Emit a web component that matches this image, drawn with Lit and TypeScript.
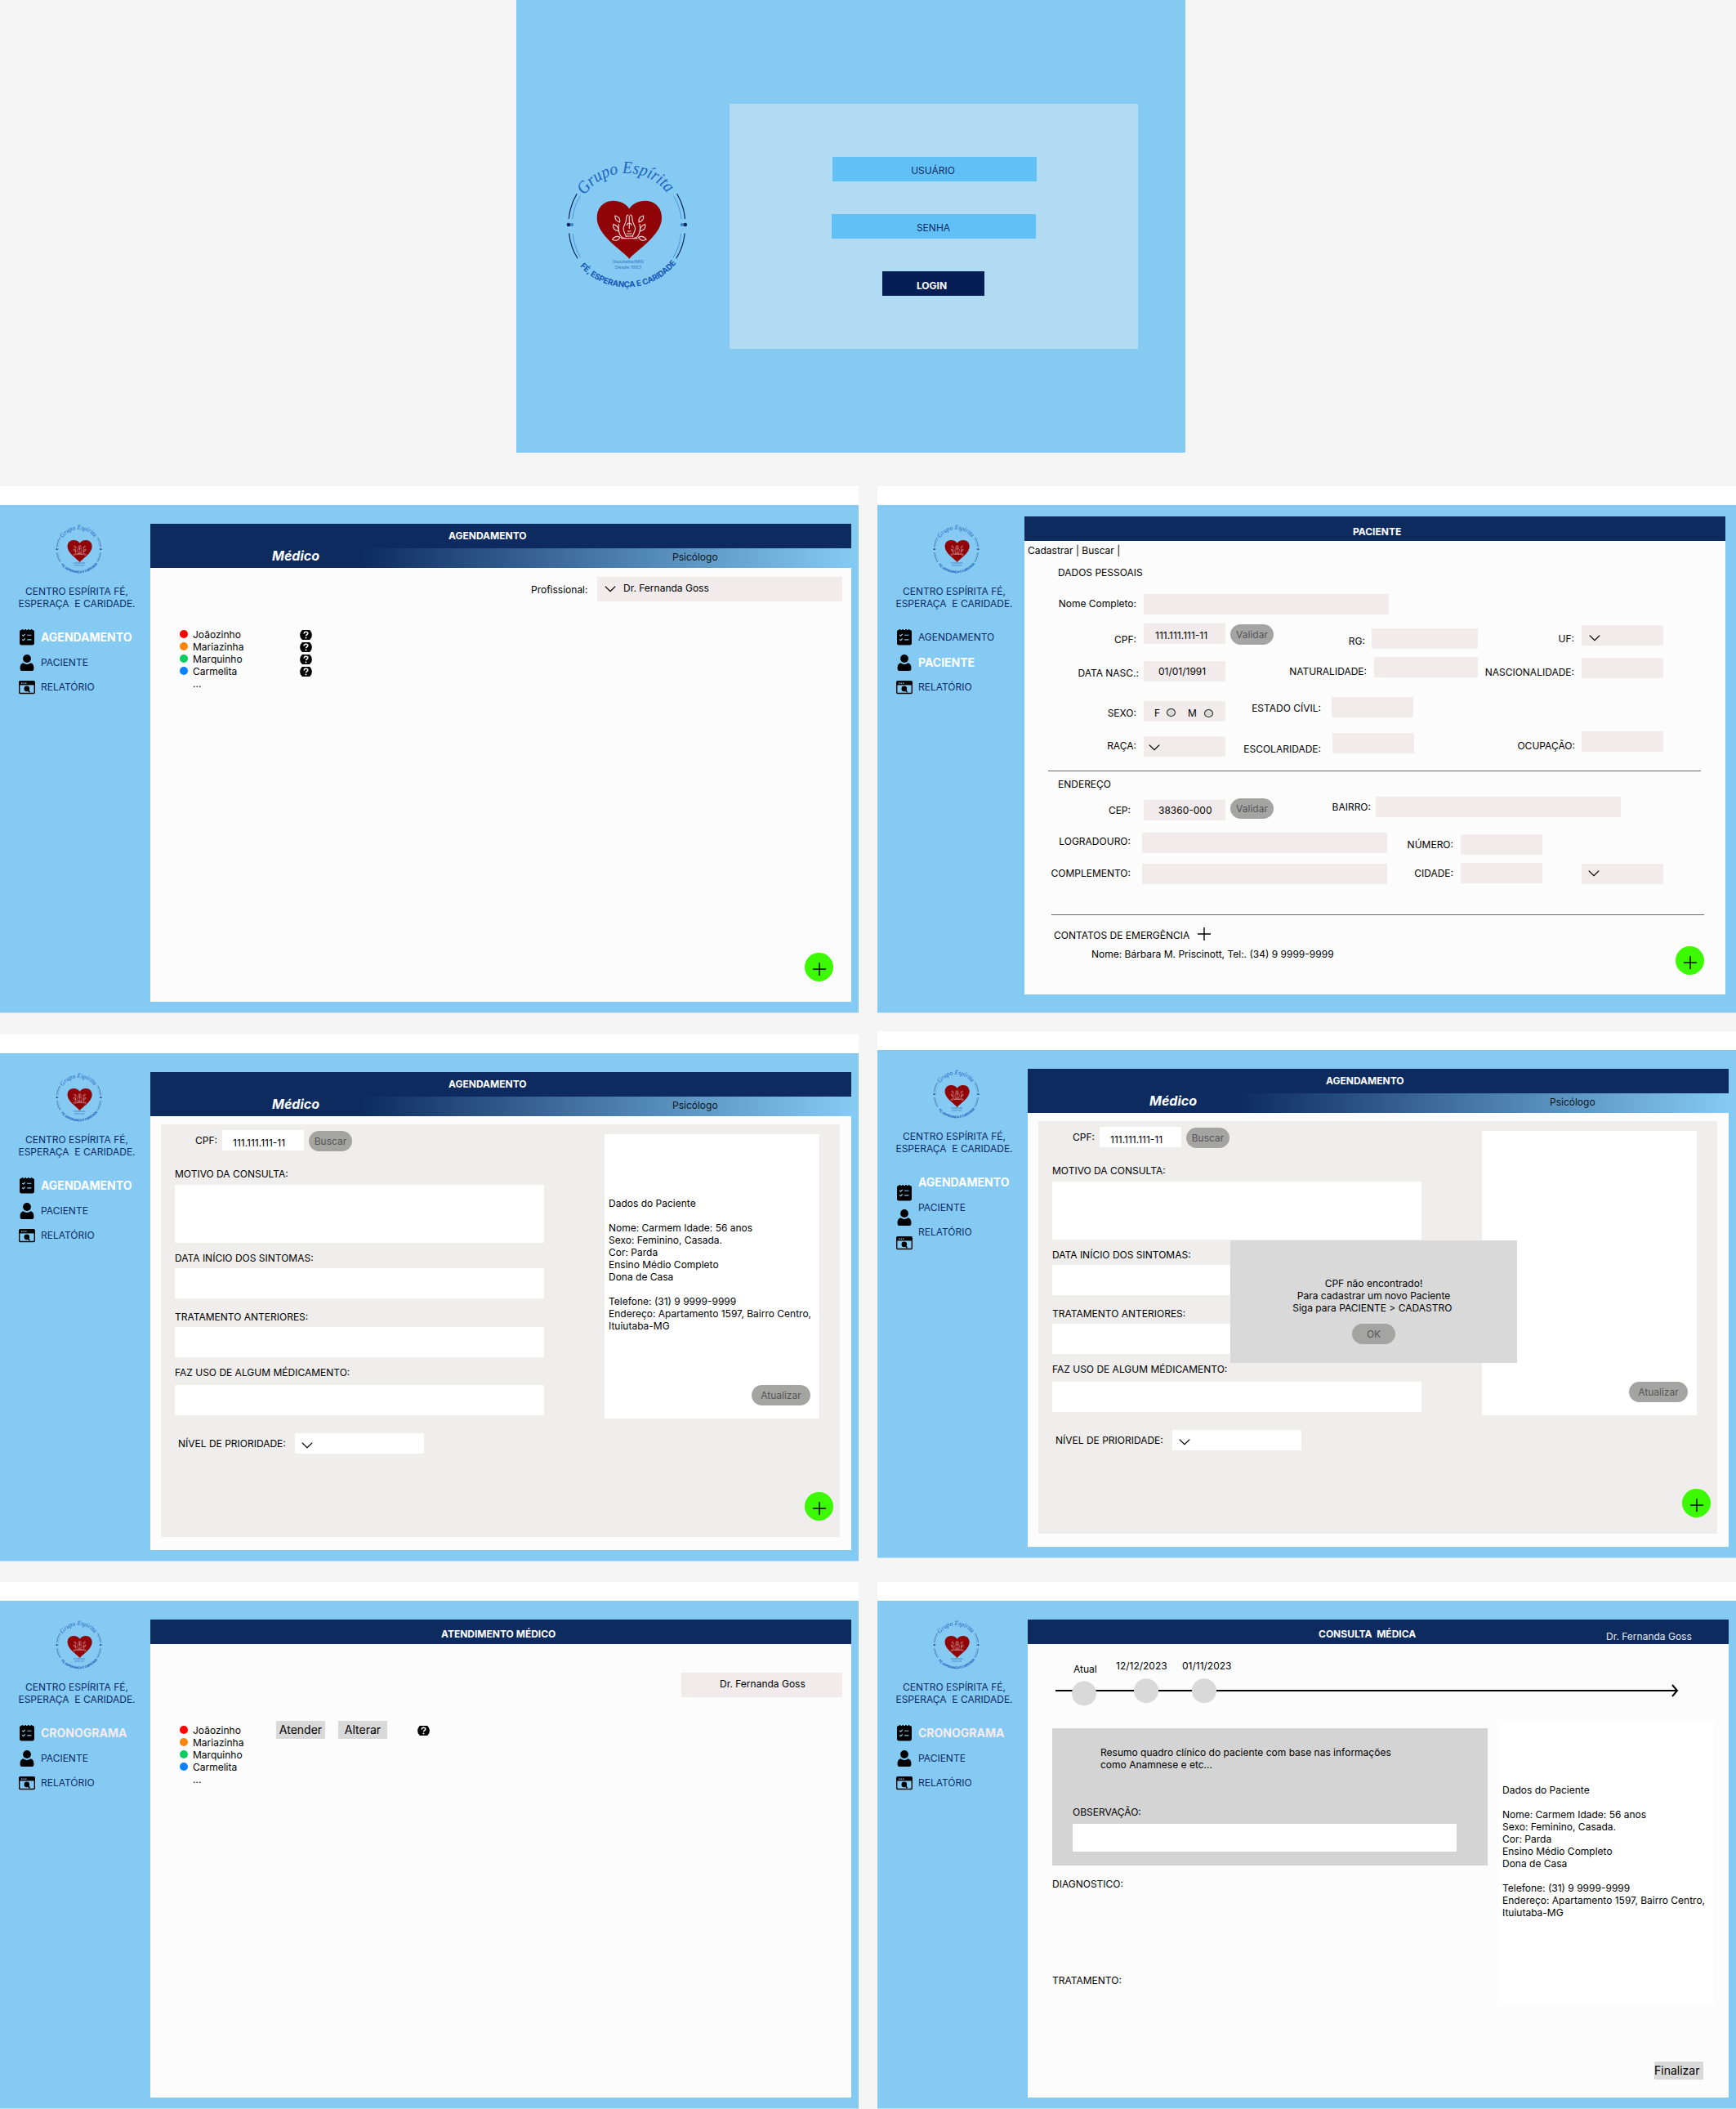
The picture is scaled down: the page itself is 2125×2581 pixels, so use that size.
import { LitElement, html, svg, css, unsafeCSS, nothing } from "lit";
import { customElement, property } from "lit/decorators.js";

/** Pixel scales for spacing and sizing helpers (ml-12, mt-4, w-100, h-25). */
const scale = (prefix: string, prop: string, max: number) =>
  Array.from({ length: max + 1 }, (_, i) => `.${prefix}-${i}{${prop}:${i}px}`).join("");

const spacing = unsafeCSS(
  scale("ml", "margin-left", 820) +
    scale("mt", "margin-top", 120) +
    scale("w", "width", 860) +
    scale("h", "height", 360),
);

const base = css`
  * {
    box-sizing: border-box;
  }
  :host {
    font-family: Inter, "Liberation Sans", sans-serif;
    font-size: 12px;
    line-height: 15px;
    color: #000;
  }
  svg {
    display: block;
    flex: none;
  }
`;

const calendarIcon = html`<svg width="20" height="20" viewBox="0 0 20 20">
  <rect x="1" y="1" width="18" height="18.200" rx="2" />
  <path d="M4.5 0v3M8.2 0v3M11.8 0v3M15.5 0v3" stroke="#000" stroke-width="1.6" />
  <path d="M2.5 19.4h15" stroke="#2a4658" stroke-width=".6" />
  <path d="M4.2 7l1.300 1.200 2.200-2.200M4.200 12.500l1.300 1.200 2.200-2.200M10.200 7.300h5.200M10.200 12.900h5.200" fill="none" stroke="#84caf3" stroke-width="1.1" />
</svg>`;

const userIcon = html`<svg width="20" height="20" viewBox="0 0 20 20">
  <circle cx="10" cy="5" r="4.9" />
  <path d="M5.500 10.200a6.800 6.800 0 0 0 9 0c2.500.6 3.900 2.900 3.900 5.600v1.400c0 1.900-1.200 3-3.100 3H4.700c-1.900 0-3.100-1.100-3.100-3v-1.400c0-2.700 1.400-5 3.900-5.600z" />
</svg>`;

const reportIcon = html`<svg width="20" height="20" viewBox="0 0 20 20">
  <rect x=".7" y="2.700" width="18.600" height="14.800" rx="1.200" fill="none" stroke="#000" stroke-width="1.400" />
  <path d="M1 3h18v4.400H1z" />
  <path d="M3 5.200h1.500M5.500 5.200h1.500M8 5.200h1.500" stroke="#84caf3" stroke-width="1.200" />
  <circle cx="9.800" cy="11.900" r="3.300" />
  <path d="M11.800 14l1.600 2.200" stroke="#000" stroke-width="1.600" />
</svg>`;

const helpIcon = html`<svg width="15" height="12" viewBox="0 0 15 12">
  <circle cx="7.500" cy="6" r="7.400" />
  <path d="M5.200 4.400c0-1.400 1-2.100 2.300-2.100s2.300.7 2.300 1.900c0 1.500-2.200 1.500-2.200 3.100" fill="none" stroke="#fff" stroke-width="1.600" />
  <circle cx="7.500" cy="9.400" r="1" fill="#fff" />
</svg>`;

const chevron = html`<svg class="chevron" width="14" height="8" viewBox="0 0 14 8">
  <path d="M.8.6L7 6.600 13.200.6" fill="none" stroke="#000" stroke-width="1.300" />
</svg>`;

const plus = html`<svg width="16" height="16" viewBox="0 0 16 16">
  <path d="M8 0v16M0 8h16" stroke="#000" stroke-width="1.400" />
</svg>`;

@customElement("brand-logo")
export class BrandLogo extends LitElement {
  static styles = css`
    :host {
      display: block;
    }
    svg {
      display: block;
      width: 100%;
      height: 100%;
      overflow: visible;
    }
    .script {
      font: italic 21px "Liberation Serif", serif;
      fill: #1c62bd;
    }
    .motto {
      font: 700 9.8px Inter, sans-serif;
      fill: #1457b4;
    }
    .place {
      font: 500 4.9px/1 Inter, sans-serif;
      fill: #3f80c6;
      text-anchor: middle;
    }
  `;

  render() {
    const side = svg`
      <g fill="none">
        <path d="M26.200 57A71.500 71.500 0 0 0 16.300 88M16.600 105.500A71.500 71.500 0 0 0 27 136.300" stroke="#0a2458" stroke-width="1.200"/>
        <path d="M30.400 59.500A67 67 0 0 0 20.800 88M21.200 106A67 67 0 0 0 30.600 135" stroke="#4f93da" stroke-width="1"/>
      </g>
      <circle cx="20" cy="95" r="2.100" fill="#3a7fd0"/>
      <circle cx="16" cy="95" r="2.300" fill="#0a2458"/>`;
    const leaves = svg`
      <path d="M86 111.500C79 112 76 104 77.500 94M78.500 92c-4.500-1.500-6-4.500-5.500-8 4.500 1 6.500 4 5.500 8zM77 103c-5-1-7.500-4.500-6-8.500 4.500 1.500 6.500 4.500 6 8.500zM79 110.500c-3.500-2-7-1-9.500 2.500 4 2.300 7.500 1.500 9.500-2.500z"/>
      <path d="M89.500 83c-2.500 0-2.800 2-2.800 4.500 0 6-3.200 7.500-3.700 12 0 4 2.500 6 3.500 10.500"/>`;
    return html`<svg viewBox="0 0 180 200">
      <path id="top" d="M35.500 59A62.500 62.500 0 0 1 142.500 65.500" fill="none" />
      <path id="bottom" d="M29.500 145A76.500 76.500 0 0 0 147 143" fill="none" />
      <text class="script"><textPath href="#top" textLength="118" lengthAdjust="spacingAndGlyphs">Grupo Espírita</textPath></text>
      ${side}
      <g transform="translate(174.800 0) scale(-1 1)">${side}</g>
      <path fill="#900408" d="M90.300 136.700C82 126.500 50.700 108.500 50.700 86.500 50.700 73.500 59.500 65.700 70.500 65.700c9 0 16.500 4 19.800 9.800 3.300-5.800 10.800-9.800 19.800-9.800 11 0 19.900 7.800 19.900 20.800 0 22-31.400 40-39.700 50.200z" />
      <g fill="none" stroke="#f2dedd" stroke-width="1.100">
        ${leaves}
        <g transform="translate(180.600 0) scale(-1 1)">${leaves}</g>
        <path d="M90.300 84v16M87.500 96c0-4 5.600-4 5.600 0M88 103h4.600M87 106h6.600M86 109h8.600M80 111.700h20.600" />
      </g>
      <text class="place" x="89" y="142.400" textLength="38" lengthAdjust="spacingAndGlyphs">Ituiutaba/MG</text>
      <text class="place" x="89" y="149" textLength="32" lengthAdjust="spacingAndGlyphs">Desde 1953</text>
      <text class="motto"><textPath href="#bottom" textLength="134" startOffset="1">FÉ, ESPERANÇA E CARIDADE</textPath></text>
    </svg>`;
  }
}

@customElement("app-shell")
export class AppShell extends LitElement {
  @property() first = "AGENDAMENTO";
  @property() active = "AGENDAMENTO";

  static styles = [
    base,
    css`
      :host {
        display: flex;
        width: 1051px;
        height: 645px;
        border-top: 23px solid #fff;
        border-bottom: 1px solid #c3e2f4;
        background: #84caf3;
      }
      .side {
        width: var(--side, 184px);
        flex: none;
        padding-top: 18px;
        color: #0d2b66;
      }
      brand-logo {
        width: 69px;
        height: 76px;
        margin-left: 63px;
      }
      .name {
        width: 188px;
        margin-top: 4px;
        text-align: center;
        white-space: pre;
      }
      .nav {
        display: flex;
        gap: 7px;
        margin: 24px 0 0 23px;
      }
      .icons,
      .labels {
        display: grid;
        grid-auto-rows: 20px;
        row-gap: 10.5px;
      }
      .icons {
        padding-top: var(--icon-drop, 0);
      }
      .labels {
        line-height: 20px;
        white-space: nowrap;
      }
      .on {
        font-size: 14px;
        font-weight: 700;
        color: var(--active, #fff);
      }
      .main {
        display: flex;
        flex-direction: column;
        position: relative;
        width: 858px;
        height: 585px;
        margin-top: var(--drop, 23px);
        background: #fcfcfc;
      }
    `,
  ];

  render() {
    const labels = [this.first, "PACIENTE", "RELATÓRIO"];
    return html`
      <div class="side">
        <brand-logo></brand-logo>
        <div class="name">CENTRO ESPÍRITA FÉ,
ESPERAÇA  E CARIDADE.</div>
        <div class="nav">
          <div class="icons">${calendarIcon}${userIcon}${reportIcon}</div>
          <div class="labels">
            ${labels.map((l) => html`<span class=${l === this.active ? "on" : ""}>${l}</span>`)}
          </div>
        </div>
      </div>
      <div class="main"><slot></slot></div>
    `;
  }
}

@customElement("app-root")
export class AppRoot extends LitElement {
  static styles = [
    base,
    spacing,
    css`
      :host {
        display: block;
        width: 2125px;
        height: 2581px;
        overflow: hidden;
        background: #f5f5f5;
      }
      .login {
        display: flex;
        align-items: flex-start;
        width: 819px;
        height: 554px;
        margin-left: 632px;
        background: #84caf3;
      }
      .login brand-logo {
        width: 180px;
        height: 200px;
        margin: 180px 0 0 48px;
      }
      .login-card {
        display: flex;
        flex-direction: column;
        width: 500px;
        height: 300px;
        margin: 127px 0 0 33px;
        padding-top: 65px;
        background: #b1daf3;
      }
      .login-card div {
        height: 30px;
        text-align: center;
        color: #0d2b66;
        background: #61c1f7;
      }
      .user {
        width: 250px;
        margin-left: 126px;
        padding: 9px 4px 0 0;
      }
      .pass {
        width: 250px;
        margin: 40px 0 0 125px;
        padding: 9px 1px 0 0;
      }
      .login-card .enter {
        width: 125px;
        margin: 40px 0 0 187px;
        padding: 10px 4px 0 0;
        font-weight: 700;
        color: #fff;
        background: #051f56;
      }
      .board {
        display: flex;
        gap: 23px;
        padding-top: 41px;
      }
      .col {
        display: flex;
        flex-direction: column;
      }
      .paciente {
        --side: 180px;
        --drop: 14px;
      }
      .missing {
        --icon-drop: 12.500px;
      }
      .crono {
        --active: #f6ecee;
      }
      .bar {
        display: flex;
        flex: none;
        height: 30px;
        font-weight: 700;
        color: #fff;
        background: #0d2b5f;
        white-space: pre;
      }
      .bar .who {
        font-weight: 400;
        color: #e4e8f0;
      }
      .tabs {
        display: flex;
        flex: none;
        height: 24px;
        white-space: nowrap;
        background: linear-gradient(90deg, #0d2b5f 30%, #84caf3 100%);
      }
      .tabs .sel {
        font-size: 16px;
        line-height: 19px;
        font-weight: 700;
        font-style: italic;
        color: #fff;
      }
      .psi {
        color: #0b131c;
      }
      .row {
        display: flex;
        align-items: flex-start;
        flex: none;
        white-space: nowrap;
      }
      .lbl {
        flex: none;
        white-space: pre;
      }
      .r {
        text-align: right;
      }
      .field {
        display: flex;
        align-items: flex-start;
        flex: none;
        background: #f1ebeb;
      }
      .white {
        background: #fff;
      }
      .pill {
        flex: none;
        height: 25px;
        border-radius: 13px;
        line-height: 26px;
        text-align: center;
        color: #555;
        background: #a4a4a3;
      }
      .rule {
        flex: none;
        width: 799px;
        height: 1px;
        background: #6e6668;
      }
      .radio {
        width: 11px;
        height: 10px;
        border: 1px solid #222;
        border-radius: 50%;
        background: #d9d9d9;
      }
      .fab {
        display: grid;
        place-items: center;
        flex: none;
        width: 35px;
        height: 35px;
        padding-top: 5px;
        border-radius: 50%;
        background: #3cfa00;
      }
      .bottom {
        margin-top: auto;
        margin-bottom: 25px;
      }
      .dots,
      .helps {
        display: grid;
      }
      .dots {
        gap: 5px;
      }
      .helps {
        gap: 3px;
      }
      .dot {
        width: 10px;
        height: 10px;
        border-radius: 50%;
      }
      .red {
        background: #f00;
      }
      .orange {
        background: #fb840c;
      }
      .green {
        background: #0ecc5f;
      }
      .blue {
        background: #0a82ff;
      }
      .box {
        display: flex;
        flex-direction: column;
        width: 831px;
        height: 505px;
        margin: 10px 0 0 13px;
        background: #efeeec;
      }
      .card {
        flex: none;
        width: 263px;
        height: 348px;
        background: #fff;
        white-space: pre;
      }
      .modal {
        position: absolute;
        left: 248px;
        top: 210px;
        width: 351px;
        height: 150px;
        padding-top: 45px;
        text-align: center;
        white-space: pre;
        background: #d9d9d9;
      }
      .modal .pill {
        width: 53px;
        margin: 12px auto 0;
      }
      .btn {
        flex: none;
        width: 60px;
        height: 22px;
        font-size: 14px;
        line-height: 22px;
        text-align: center;
        background: #d9d9d9;
      }
      .finish {
        text-align: left;
      }
      .summary {
        width: 533px;
        height: 168px;
        padding-top: 22px;
        background: #d4d4d4;
      }
    `,
  ];

  private label(text: string, cls: string) {
    return html`<span class="lbl ${cls}">${text}</span>`;
  }

  private field(cls: string, content: unknown = nothing) {
    return html`<div class="field h-25 ${cls}">${content}</div>`;
  }

  private tabs() {
    return html`
      <div class="bar"><span class="ml-365 mt-7">AGENDAMENTO</span></div>
      <div class="tabs">
        <span class="sel ml-149 w-490">Médico</span>
        <span class="psi mt-3">Psicólogo</span>
      </div>
    `;
  }

  private queue(cls: string, actions: unknown, helps: number) {
    return html`<div class="row ${cls}">
      <div class="dots ml-36 mt-6">
        ${["red", "orange", "green", "blue"].map((c) => html`<i class="dot ${c}"></i>`)}
      </div>
      <div class="lbl ml-6 mt-4 w-101">Joãozinho
Mariazinha
Marquinho
Carmelita
...</div>
      ${actions}
      <div class="helps mt-6">${Array.from({ length: helps }, () => helpIcon)}</div>
    </div>`;
  }

  private patientInfo() {
    return `Dados do Paciente

Nome: Carmem Idade: 56 anos
Sexo: Feminino, Casada.
Cor: Parda
Ensino Médio Completo
Dona de Casa

Telefone: (31) 9 9999-9999
Endereço: Apartamento 1597, Bairro Centro,
Ituiutaba-MG`;
  }

  private booking(info: string) {
    const question = (text: string, labelCls: string, fieldCls: string) => html`
      ${this.label(text, "ml-17 " + labelCls)}
      <div class="white ml-17 w-452 ${fieldCls}"></div>
    `;
    return html`
      ${this.tabs()}
      <div class="box">
        <div class="row">
          <div class="col w-543">
            <div class="row mt-7 h-25">
              ${this.label("CPF:", "ml-42 mt-5 w-33")}
              ${this.field("white w-100", this.label("111.111.111-11", "ml-13 mt-8"))}
              <span class="pill w-53 ml-6 mt-1">Buscar</span>
            </div>
            ${question("MOTIVO DA CONSULTA:", "mt-21", "mt-6 h-71")}
            ${question("DATA INÍCIO DOS SINTOMAS:", "mt-11", "mt-5 h-37")}
            ${question("TRATAMENTO ANTERIORES:", "mt-15", "mt-5 h-37")}
            ${question("FAZ USO DE ALGUM MÉDICAMENTO:", "mt-11", "mt-8 h-37")}
            <div class="row mt-22 h-25">
              ${this.label("NÍVEL DE PRIORIDADE:", "ml-21 mt-5 w-143")}
              ${this.field("white w-158", html`<span class="ml-8 mt-11">${chevron}</span>`)}
            </div>
          </div>
          <div class="card col mt-12">
            <div class="lbl ml-5 mt-77 h-165">${info}</div>
            <span class="pill w-72 ml-180 mt-65">Atualizar</span>
          </div>
        </div>
        <div class="fab ml-788 mt-47">${plus}</div>
      </div>
    `;
  }

  private patientForm() {
    const l = this.label.bind(this);
    const f = this.field.bind(this);
    const arrow = (cls: string) => html`<span class=${cls}>${chevron}</span>`;
    return html`
      <div class="bar"><span class="ml-402 mt-11">PACIENTE</span></div>
      ${l("Cadastrar | Buscar |", "ml-4 mt-4")}
      ${l("DADOS PESSOAIS", "ml-41 mt-12")}
      <div class="row mt-19 h-25">
        ${l("Nome Completo:", "r w-137 mt-4")}${f("ml-9 w-300")}
      </div>
      <div class="row mt-11 h-31">
        ${l("CPF:", "r w-137 mt-12")}${f("ml-9 w-100", l("111.111.111-11", "ml-14 mt-7"))}
        <span class="pill w-53 ml-6 mt-1">Validar</span>
        ${l("RG:", "r w-112 mt-14")}${f("ml-8 mt-6 w-130")}
        ${l("UF:", "r w-118 mt-11")}${f("ml-9 mt-2 w-100", arrow("ml-9 mt-12"))}
      </div>
      <div class="row mt-10 h-30">
        ${l("DATA NASC.:", "r w-140 mt-12")}${f("ml-6 mt-5 w-100", l("01/01/1991", "ml-18 mt-5"))}
        ${l("NATURALIDADE:", "r w-173 mt-10")}${f("ml-9 w-127")}
        ${l("NASCIONALIDADE:", "r w-118 mt-11")}${f("ml-9 mt-1 w-100")}
      </div>
      <div class="row mt-19 h-30">
        ${l("SEXO:", "r w-137 mt-12")}
        ${f(
          "ml-9 mt-5 w-100",
          html`${l("F", "ml-13 mt-7 w-15")}<i class="radio mt-9"></i>${l("M", "ml-15 mt-7 w-20")}<i
              class="radio mt-10"
            ></i>`,
        )}
        ${l("ESTADO CÍVIL:", "r w-117 mt-6")}${f("ml-13 w-100")}
      </div>
      <div class="row mt-12 h-31">
        ${l("RAÇA:", "r w-137 mt-10")}${f("ml-9 mt-6 w-100", arrow("ml-6 mt-10"))}
        ${l("ESCOLARIDADE:", "r w-117 mt-14")}${f("ml-14 mt-2 w-100")}
        ${l("OCUPAÇÃO:", "r w-197 mt-10")}${f("ml-8 w-100")}
      </div>
      <div class="rule ml-29 mt-17"></div>
      ${l("ENDEREÇO", "ml-41 mt-8")}
      <div class="row mt-8 h-29">
        ${l("CEP:", "r w-130 mt-9")}${f("ml-16 mt-4 w-100", l("38360-000", "ml-18 mt-5"))}
        <span class="pill w-53 ml-6 mt-2">Validar</span>
        ${l("BAIRRO:", "r w-119 mt-5")}${f("ml-6 w-300")}
      </div>
      <div class="row mt-15 h-27">
        ${l("LOGRADOURO:", "r w-130 mt-3")}${f("ml-14 w-300")}
        ${l("NÚMERO:", "r w-81 mt-7")}${f("ml-9 mt-2 w-100")}
      </div>
      <div class="row mt-10 h-26">
        ${l("COMPLEMENTO:", "r w-130 mt-5")}${f("ml-14 mt-1 w-300")}
        ${l("CIDADE:", "r w-81 mt-5")}${f("ml-9 w-100")}
        ${f("ml-48 mt-1 w-100", arrow("ml-8 mt-8"))}
      </div>
      <div class="rule ml-33 mt-37"></div>
      <div class="row mt-15 h-17">${l("CONTATOS DE EMERGÊNCIA", "ml-36 w-176 mt-2")}${plus}</div>
      <div class="row mt-6">
        ${l("Nome: Bárbara M. Priscinott, Tel:. (34) 9 9999-9999", "ml-82 w-715 mt-2")}
        <div class="fab">${plus}</div>
      </div>
    `;
  }

  private consultation() {
    return html`
      <div class="bar">
        <span class="ml-356 w-352 mt-10">CONSULTA  MÉDICA</span><span class="who mt-13">Dr. Fernanda Goss</span>
      </div>
      <div class="row h-42">
        ${this.label("Atual", "ml-56 w-52 mt-23")}
        ${this.label("12/12/2023", "w-81 mt-19")}
        ${this.label("01/11/2023", "mt-19")}
      </div>
      <svg class="ml-34" width="764" height="34" viewBox="0 0 764 34">
        <path d="M0 15h761M755 8l6 7-6 7" fill="none" stroke="#000" stroke-width="2" />
        <g fill="#d9d9d9">
          <circle cx="35" cy="18.500" r="15" />
          <circle cx="111" cy="15.200" r="15" />
          <circle cx="182" cy="15.200" r="15" />
        </g>
      </svg>
      <div class="row mt-18">
        <div class="col ml-30 w-546 mt-9">
          <div class="summary col">
            ${this.label("Resumo quadro clínico do paciente com base nas informações\ncomo Anamnese e etc...", "ml-59")}
            ${this.label("OBSERVAÇÃO:", "ml-25 mt-43")}
            <div class="white ml-25 mt-7 w-470 h-34"></div>
          </div>
          ${this.label("DIAGNOSTICO:", "mt-15")}
          ${this.label("TRATAMENTO:", "mt-103")}
        </div>
        <div class="card"><div class="lbl ml-5 mt-77">${this.patientInfo()}</div></div>
      </div>
      <span class="btn finish ml-767 mt-69">Finalizar</span>
    `;
  }

  render() {
    return html`
      <div class="login">
        <brand-logo></brand-logo>
        <div class="login-card">
          <div class="user">USUÁRIO</div>
          <div class="pass">SENHA</div>
          <div class="enter">LOGIN</div>
        </div>
      </div>

      <div class="board">
        <div class="col">
          <app-shell>
            ${this.tabs()}
            <div class="row">
              ${this.label("Profissional:", "ml-466 w-81 mt-19")}
              <div class="field w-300 h-30 mt-11">
                <span class="ml-9 mt-11">${chevron}</span>${this.label("Dr. Fernanda Goss", "ml-9 mt-6")}
              </div>
            </div>
            ${this.queue("mt-29", html`<span class="ml-30"></span>`, 4)}
            <div class="fab bottom ml-801">${plus}</div>
          </app-shell>
          <app-shell class="mt-26">${this.booking(this.patientInfo())}</app-shell>
          <app-shell class="crono mt-25" first="CRONOGRAMA" active="CRONOGRAMA">
            <div class="bar"><span class="ml-356 mt-10">ATENDIMENTO MÉDICO</span></div>
            <div class="field h-30 w-197 ml-650 mt-35">${this.label("Dr. Fernanda Goss", "ml-47 mt-6")}</div>
            ${this.queue(
              "mt-29",
              html`<span class="btn ml-1">Atender</span><span class="btn ml-16">Alterar</span
                ><span class="ml-37"></span>`,
              1,
            )}
          </app-shell>
        </div>
        <div class="col">
          <app-shell class="paciente" active="PACIENTE">${this.patientForm()}</app-shell>
          <app-shell class="missing mt-22">
            ${this.booking("")}
            <div class="modal">CPF não encontrado!
Para cadastrar um novo Paciente
Siga para PACIENTE &gt; CADASTRO <div class="pill">OK</div></div>
          </app-shell>
          <app-shell class="crono mt-29" first="CRONOGRAMA" active="CRONOGRAMA">${this.consultation()}</app-shell>
        </div>
      </div>
    `;
  }
}
